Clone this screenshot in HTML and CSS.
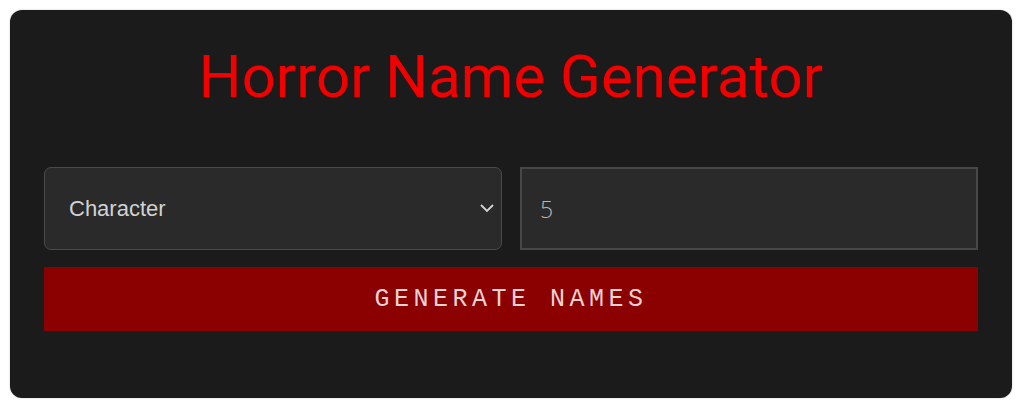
FILE: index.html
```html
<!DOCTYPE html>
<html lang="en">
<head>
  <meta charset="UTF-8" />
  <meta name="viewport" content="width=device-width, initial-scale=1.0" />
  <title>Horror Name Generator</title>
  <link rel="stylesheet" href="styles.css">
</head>
<body>
  <div class="generator">
    <h1>Horror Name Generator</h1>

    <div class="controls">
      <div class="select-wrap">
        <select id="name-type">
          <option>Character</option>
          <option>Place</option>
          <option>Monster</option>
        </select>
        <svg class="chevron" width="16" height="12" viewBox="0 0 16 12">
          <path d="M2 3 L8 9 L14 3" fill="none" stroke="#d4d4d4" stroke-width="1.8" />
        </svg>
      </div>
      <input type="number" id="name-count" value="5" min="1" max="20" />
    </div>

    <button class="generate-button">Generate Names</button>
  </div>
</body>
</html>
```

FILE: styles.css
```css
body {
  margin: 0;
  background-color: #ffffff;
  padding: 10px 12px 3px 10px;
}

.generator {
  background-color: #1b1b1b;
  border-radius: 12px;
  padding: 31px 34px 67px;
  box-shadow: 0 0 2px rgba(0,0,0,0.25);
}

h1 {
  margin: 0 0 54px;
  font-family: Roboto, sans-serif;
  font-weight: 400;
  font-size: 60px;
  line-height: 72px;
  color: #f20000;
  text-align: center;
}

.controls {
  display: grid;
  grid-template-columns: 1fr 1fr;
  gap: 18px;
  margin-bottom: 17px;
}

.select-wrap {
  position: relative;
}

select {
  appearance: none;
  -webkit-appearance: none;
  width: 100%;
  height: 83px;
  box-sizing: border-box;
  background-color: #2a2a2a;
  border: 1px solid #4a4a4a;
  border-radius: 7px;
  color: #d2d2d2;
  font-family: 'Liberation Sans', Arial, sans-serif;
  font-size: 22px;
  padding: 0 24px;
  outline: none;
}

.chevron {
  position: absolute;
  right: 7px;
  top: 35px;
  pointer-events: none;
}

input {
  width: 100%;
  height: 83px;
  box-sizing: border-box;
  background-color: #2a2a2a;
  border: 2px solid #474747;
  color: #b8b8b8;
  font-family: 'Open Sans', sans-serif;
  font-weight: 300;
  font-size: 23px;
  padding: 0 18px;
  outline: none;
  -moz-appearance: textfield;
}

input::-webkit-outer-spin-button,
input::-webkit-inner-spin-button {
  -webkit-appearance: none;
  margin: 0;
}

.generate-button {
  display: block;
  width: 100%;
  height: 64px;
  background-color: #8b0000;
  border: none;
  color: #ecd2d2;
  font-family: 'Liberation Mono', 'Courier New', monospace;
  font-size: 25px;
  letter-spacing: 4.5px;
  text-transform: uppercase;
  cursor: pointer;
}
```
